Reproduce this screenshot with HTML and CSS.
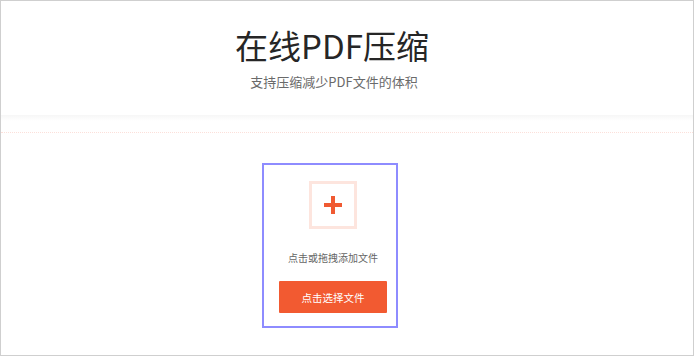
FILE: index.html
```html
<!DOCTYPE html>
<html lang="zh-CN">
<head>
    <meta charset="UTF-8">
    <meta name="viewport" content="width=device-width, initial-scale=1.0">
    <title>在线PDF压缩</title>
    <link rel="stylesheet" href="styles.css">
</head>
<body>
    <div class="page">
        <div class="header">
            <h1 class="title">在线PDF压缩</h1>
            <p class="subtitle">支持压缩减少PDF文件的体积</p>
        </div>
        <div class="header-shadow"></div>
        <div class="divider"></div>
        <div class="main">
            <div class="upload-box">
                <div class="add-icon">
                    <svg width="18" height="18" viewBox="0 0 18 18">
                        <rect x="0" y="7" width="18" height="4" fill="#f05a32"/>
                        <rect x="7" y="0" width="4" height="18" fill="#f05a32"/>
                    </svg>
                </div>
                <p class="hint">点击或拖拽添加文件</p>
                <button class="select-btn">点击选择文件</button>
            </div>
        </div>
    </div>
</body>
</html>
```

FILE: styles.css
```css
body {
    margin: 0;
    font-family: "Noto Sans CJK SC", "Noto Sans", sans-serif;
    background-color: #ffffff;
}
.page {
    box-sizing: border-box;
    width: 694px;
    height: 356px;
    border: 1px solid #cfcfcf;
    background: #ffffff;
}
.header {
    height: 114px;
    padding-top: 27px;
    box-sizing: border-box;
    text-align: center;
    padding-right: 30px;
}
.title {
    margin: 0;
    font-size: 33px;
    line-height: 34px;
    font-weight: 400;
    color: #262626;
}
.subtitle {
    margin: 13px 0 0;
    padding-left: 4px;
    font-size: 13px;
    line-height: 13px;
    color: #6a6a6a;
}
.header-shadow {
    height: 6px;
    background: linear-gradient(#f6f6f6, #ffffff);
}
.divider {
    margin-top: 11px;
    border-top: 1px dotted #fce0da;
}
.main {
    display: flex;
    justify-content: center;
    padding-top: 30px;
    padding-right: 34px;
}
.upload-box {
    box-sizing: border-box;
    width: 136px;
    height: 165px;
    border: 2px solid #8e8cff;
    padding: 16px 0 0 6px;
    display: flex;
    flex-direction: column;
    align-items: center;
}
.add-icon {
    box-sizing: border-box;
    width: 48px;
    height: 48px;
    border: 3px solid #fde5de;
    display: flex;
    align-items: center;
    justify-content: center;
}
.hint {
    margin: 22px 0 0;
    font-size: 10px;
    line-height: 14px;
    color: #666;
}
.select-btn {
    margin-top: 16px;
    width: 108px;
    height: 32px;
    border: none;
    border-radius: 1px;
    background-color: #f25a31;
    color: #ffffff;
    font-family: "Noto Sans CJK SC", sans-serif;
    font-size: 10.5px;
    padding: 0;
}
```
